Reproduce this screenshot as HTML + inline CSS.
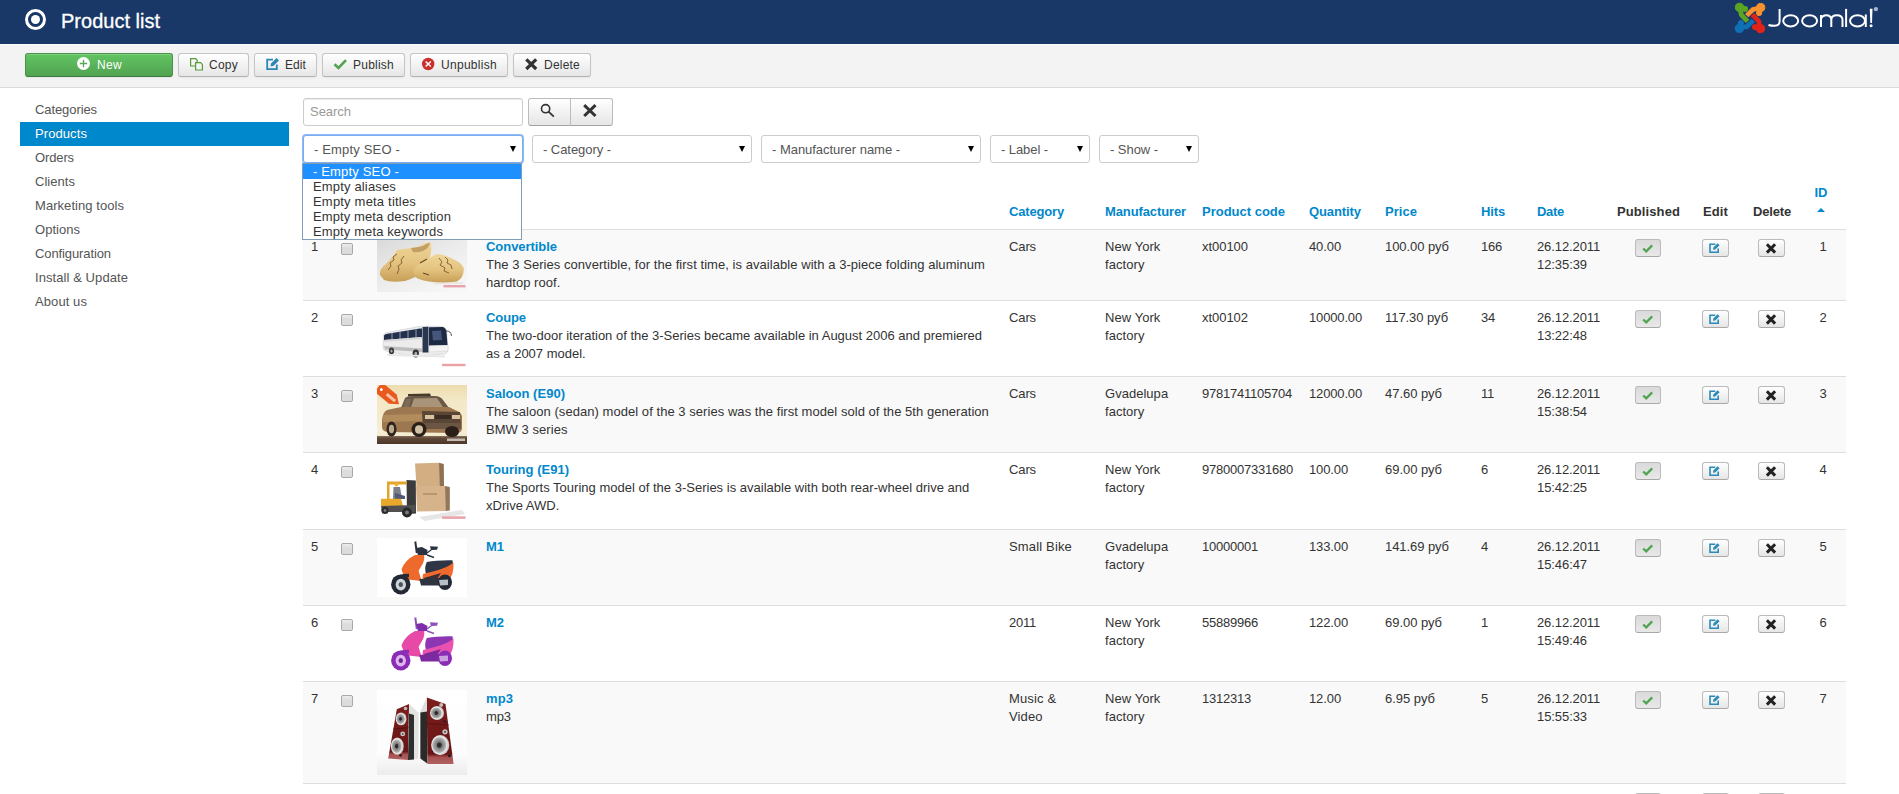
<!DOCTYPE html>
<html><head><meta charset="utf-8">
<style>
*{box-sizing:border-box}
html,body{margin:0;padding:0;background:#fff;width:1899px;height:794px;overflow:hidden}
body{font-family:"Liberation Sans",sans-serif;font-size:13px;line-height:18px;color:#333;position:relative}
.hdr{position:absolute;left:0;top:0;width:1899px;height:44px;background:#1a3867}
.hdr .ring{position:absolute;left:25px;top:9px;width:21px;height:21px;border:3px solid #fff;border-radius:50%}
.hdr .ring:after{content:"";position:absolute;left:3px;top:3px;width:9px;height:9px;background:#fff;border-radius:50%}
.hdr h1{position:absolute;left:61px;top:9px;margin:0;font-size:20px;line-height:24px;font-weight:normal;color:#fff;-webkit-text-stroke:0.3px #fff}
.tb{position:absolute;left:0;top:44px;width:1899px;height:44px;background:#f3f3f3;border-top:1px solid #fafafa;border-bottom:1px solid #dadada}
.btn{position:absolute;top:53px;height:24px;border:1px solid #c5c5c5;border-bottom-color:#b3b3b3;border-radius:3px;background:linear-gradient(#fff,#e6e6e6);font-size:12px;line-height:20px;color:#333;box-shadow:inset 0 1px 0 rgba(255,255,255,.2),0 1px 2px rgba(0,0,0,.05)}
.btn span{position:absolute;top:1px}
.btn svg{position:absolute}
.btn.green{background:linear-gradient(#62c462,#51a351);border-color:#4b934b;border-bottom-color:#3d7a3d;color:#fff}
.sbtn{position:absolute;top:98px;height:28px;border:1px solid #bbb;border-bottom-color:#a2a2a2;background:linear-gradient(#fff,#e6e6e6)}
.side{position:absolute;left:20px;top:98px;width:269px}
.side div{height:24px;line-height:24px;padding-left:15px;color:#555}
.side div.act{background:#0088cc;color:#fff;text-shadow:0 -1px 0 rgba(0,0,0,.2)}
.inp{position:absolute;border:1px solid #ccc;border-radius:3px;background:#fff;box-shadow:inset 0 1px 1px rgba(0,0,0,.075)}
.sel{position:absolute;top:135px;height:28px;border:1px solid #ccc;border-radius:3px;background:#fff;color:#555}
.sel span{position:absolute;left:10px;top:5px}
.sel i{position:absolute;right:6px;top:10px;width:0;height:0;border-left:3px solid transparent;border-right:3px solid transparent;border-top:6px solid #000}
.dd{position:absolute;left:302px;top:163px;width:220px;height:77px;border:1px solid #7f9db9;background:#fff;font-size:13px;line-height:15px;color:#333}
.dd div{height:15px;padding-left:10px}
.dd div.h{background:#1e90ff;color:#fff}
table.list{position:absolute;left:303px;top:177px;border-collapse:separate;border-spacing:0;table-layout:fixed;width:1543px}
table.list th{padding:8px;text-align:left;vertical-align:bottom;font-weight:bold;line-height:18px;color:#333}
table.list th a{color:#0088cc}
table.list td{padding:8px;vertical-align:top;border-top:1px solid #ddd;line-height:18px;white-space:normal}
table.list tr.odd td{background:#f9f9f9}
table.list .c{text-align:center}
a.t{color:#0088cc;font-weight:bold}
.cb{display:block;width:12px;height:12px;margin-top:5px;border:1px solid #a8a8a8;border-radius:2px;background:linear-gradient(#ececec,#dcdcdc 45%,#dcdcdc)}
.im{width:90px;position:relative;overflow:hidden;background:#fff}
.mb{display:inline-block;width:27px;height:18px;border:1px solid #bbb;border-bottom-color:#a8a8a8;border-radius:3px;background:linear-gradient(#fff,#e6e6e6);margin-top:1px;position:relative;vertical-align:top}
.mb.dl{left:-1px}
.mb.act{width:26px;background:linear-gradient(#dadada,#e8e8e8)}
.caret{display:inline-block;width:0;height:0;border-left:4px solid transparent;border-right:4px solid transparent;border-bottom:4px solid #0088cc;vertical-align:middle}
</style></head><body>
<div class="hdr"><div class="ring"></div><h1><x-l style="letter-spacing: 0.006px;">Product list</x-l></h1><svg style="position:absolute;left:1733px;top:1px" width="150" height="34" viewBox="1733 1 150 34">





<g fill="#5aa624" stroke="#5aa624"><circle cx="1739.5" cy="7.3" r="4.1"></circle><circle cx="1745" cy="8.9" r="2.6"></circle><path d="M1739.3 7.2 L1745.2 8.8" stroke-width="4"></path><path d="M1740.3 9 L1741.3 14.8 L1747.6 21.3" stroke-width="4.8" fill="none" stroke-linejoin="round"></path></g><g fill="#0f70b6" stroke="#0f70b6" transform="rotate(-90 1750 18)"><circle cx="1739.5" cy="7.3" r="4.1"></circle><circle cx="1745" cy="8.9" r="2.6"></circle><path d="M1739.3 7.2 L1745.2 8.8" stroke-width="4"></path><path d="M1740.3 9 L1741.3 14.8 L1747.6 21.3" stroke-width="4.8" fill="none" stroke-linejoin="round"></path></g><g fill="#e2231a" stroke="#e2231a" transform="rotate(180 1750 18)"><circle cx="1739.5" cy="7.3" r="4.1"></circle><circle cx="1745" cy="8.9" r="2.6"></circle><path d="M1739.3 7.2 L1745.2 8.8" stroke-width="4"></path><path d="M1740.3 9 L1741.3 14.8 L1747.6 21.3" stroke-width="4.8" fill="none" stroke-linejoin="round"></path></g><g fill="#f7922f" stroke="#f7922f" transform="rotate(90 1750 18)"><circle cx="1739.5" cy="7.3" r="4.1"></circle><circle cx="1745" cy="8.9" r="2.6"></circle><path d="M1739.3 7.2 L1745.2 8.8" stroke-width="4"></path><path d="M1740.3 9 L1741.3 14.8 L1747.6 21.3" stroke-width="4.8" fill="none" stroke-linejoin="round"></path></g><g stroke="#fff" fill="none" stroke-width="2">
<path d="M1779.6 8.9 V21.5 Q1779.6 25.8 1774.5 25.8 Q1771 25.8 1768.5 25"></path>
<ellipse cx="1790.7" cy="20.85" rx="7.5" ry="5.6"></ellipse>
<ellipse cx="1809.6" cy="20.85" rx="7.5" ry="5.6"></ellipse>
<path d="M1821 27 V15 M1821 18.5 Q1822.5 15.3 1826 15.3 Q1831.3 15.3 1831.3 20 V27 M1831.3 20 Q1831.3 15.3 1836.8 15.3 Q1842.5 15.3 1842.5 20 V27"></path>
<path d="M1846.1 8.9 V27"></path>
<ellipse cx="1857.5" cy="20.85" rx="7.5" ry="5.6"></ellipse>
<path d="M1865.8 14.5 V27"></path>
</g>
<path d="M1869.8 8.7 H1872.5 L1872 23 H1870.3 Z" fill="#fff"></path><circle cx="1871.1" cy="25.7" r="1.5" fill="#fff"></circle>
<circle cx="1875.9" cy="9.1" r="2.2" fill="#aab4c8"></circle>
</svg></div>
<div class="tb"></div>
<div class="btn green" style="left:25px;width:148px"><span style="left:71px"><x-l style="letter-spacing: 0.331px;">New</x-l></span></div>
<div class="btn" style="left:178px;width:71px"><span style="left:30px"><x-l style="letter-spacing: 0.247px;">Copy</x-l></span></div>
<div class="btn" style="left:254px;width:63px"><span style="left:30px"><x-l style="letter-spacing: 0.081px;">Edit</x-l></span></div>
<div class="btn" style="left:322px;width:83px"><span style="left:30px"><x-l style="letter-spacing: 0.235px;">Publish</x-l></span></div>
<div class="btn" style="left:410px;width:98px"><span style="left:30px"><x-l style="letter-spacing: 0.293px;">Unpublish</x-l></span></div>
<div class="btn" style="left:513px;width:78px"><span style="left:30px"><x-l style="letter-spacing: 0.219px;">Delete</x-l></span></div>


<svg style="position:absolute;left:0;top:0;z-index:5" width="620" height="130">
<circle cx="83.5" cy="63.5" r="6.5" fill="#fff"></circle>
<path d="M83.5 59.8 V67.2 M79.8 63.5 H87.2" stroke="#55aa55" stroke-width="1.3"></path>
<g fill="none" stroke="#5b9a3a" stroke-width="1.2">
<path d="M190.6 58.6 H195.5 L197.2 60.3 V66 H190.6 Z"></path>
<path d="M195.6 62.6 H200.6 L202.4 64.4 V70 H195.6 Z" fill="#f4f4f4"></path>
</g>
<g fill="none" stroke="#2b86b8" stroke-width="1.8">
<path d="M273 59.6 H267.2 V69.1 H276.8 V64.5"></path>
</g>
<path d="M270.5 66.3 L271 63.6 L276.6 58 L279 60.4 L273.3 66 Z" fill="#2b86b8"></path>
<path d="M334.5 64.2 L338.5 68 L346 60.2" fill="none" stroke="#51a351" stroke-width="2.6"></path>
<circle cx="428.2" cy="64" r="6.2" fill="#c9302c"></circle>
<path d="M425.6 61.4 L430.8 66.6 M430.8 61.4 L425.6 66.6" stroke="#fff" stroke-width="1.4"></path>
<path d="M526.3 59.3 L536.2 69 M536.2 59.3 L526.3 69" stroke="#333" stroke-width="3.2"></path>
<circle cx="545.6" cy="108.7" r="4.1" fill="none" stroke="#333" stroke-width="1.6"></circle>
<path d="M548.5 111.6 L553.8 116.6" stroke="#333" stroke-width="1.8"></path>
<path d="M584.2 105.2 L595.5 116 M595.5 105.2 L584.2 116" stroke="#333" stroke-width="3"></path>
</svg>
<div class="side">
<div><x-l style="letter-spacing: -0.087px;">Categories</x-l></div><div class="act"><x-l style="letter-spacing: 0.087px;">Products</x-l></div><div><x-l style="letter-spacing: -0.122px;">Orders</x-l></div><div><x-l style="letter-spacing: 0.038px;">Clients</x-l></div><div><x-l style="letter-spacing: 0.057px;">Marketing tools</x-l></div><div><x-l style="letter-spacing: 0.028px;">Options</x-l></div><div><x-l style="letter-spacing: -0.102px;">Configuration</x-l></div><div><x-l style="letter-spacing: 0.077px;">Install &amp; Update</x-l></div><div><x-l style="letter-spacing: 0.086px;">About us</x-l></div>
</div>

<div class="inp" style="left:303px;top:98px;width:220px;height:28px"><span style="position:absolute;left:6px;top:4px;color:#999"><x-l style="letter-spacing: -0.032px;">Search</x-l></span></div>

<div class="sbtn" style="left:528px;width:43px;border-radius:3px 0 0 3px"></div><div class="sbtn" style="left:570px;width:43px;border-radius:0 3px 3px 0"></div>
<div class="sel" style="left:303px;width:220px;border-color:#7aaef0;box-shadow:0 0 0 1px #8dbaf3"><span><x-l style="letter-spacing: 0.17px;">- Empty SEO -</x-l></span><i></i></div>
<div class="sel" style="left:532px;width:220px"><span><x-l style="letter-spacing: -0.053px;">- Category -</x-l></span><i></i></div>
<div class="sel" style="left:761px;width:220px"><span><x-l style="letter-spacing: -0.029px;">- Manufacturer name -</x-l></span><i></i></div>
<div class="sel" style="left:990px;width:100px"><span><x-l style="letter-spacing: -0.077px;">- Label -</x-l></span><i></i></div>
<div class="sel" style="left:1099px;width:100px"><span><x-l style="letter-spacing: -0.05px;">- Show -</x-l></span><i></i></div>

<table class="list" style="top:177px">
<colgroup><col style="width:30px"><col style="width:36px"><col style="width:109px"><col style="width:523px"><col style="width:96px"><col style="width:97px"><col style="width:107px"><col style="width:76px"><col style="width:96px"><col style="width:56px"><col style="width:80px"><col style="width:78px"><col style="width:57px"><col style="width:56px"><col style="width:46px"></colgroup>
<thead><tr style="height:52px"><th></th><th></th><th></th><th></th><th><a><x-l style="letter-spacing: -0.169px;">Category</x-l></a></th><th><a><x-l style="letter-spacing: -0.112px;">Manufacturer</x-l></a></th><th><a><x-l style="letter-spacing: -0.005px;">Product code</x-l></a></th><th><a><x-l style="letter-spacing: -0.09px;">Quantity</x-l></a></th><th><a><x-l style="letter-spacing: 0.04px;">Price</x-l></a></th><th><a><x-l style="letter-spacing: -0.14px;">Hits</x-l></a></th><th><a><x-l style="letter-spacing: -0.294px;">Date</x-l></a></th><th class="c"><x-l style="letter-spacing: 0.098px;">Published</x-l></th><th class="c"><x-l style="letter-spacing: 0.112px;">Edit</x-l></th><th class="c"><x-l style="letter-spacing: -0.17px;">Delete</x-l></th><th class="c" style="position:relative;left:-2px;top:-1px"><a>ID</a><br><i class="caret" style="position:relative;top:-2px"></i></th></tr></thead><tbody>
<tr class="odd" style="height:71px"><td><x-l style="letter-spacing: -0.23px;">1</x-l></td><td><span class="cb"></span></td><td><div class="im shoe" style="height:54px"><svg width="90" height="54" viewBox="0 0 90 54"><defs><linearGradient id="sbg" x1="0" y1="0" x2="0.8" y2="1"><stop offset="0" stop-color="#d9d9d9"></stop><stop offset="0.5" stop-color="#ebebeb"></stop><stop offset="1" stop-color="#f7f7f7"></stop></linearGradient><linearGradient id="sh1" x1="0" y1="0" x2="0" y2="1"><stop offset="0" stop-color="#efd699"></stop><stop offset=".55" stop-color="#e3c27e"></stop><stop offset="1" stop-color="#c79f58"></stop></linearGradient></defs><rect width="90" height="54" fill="url(#sbg)"></rect><path d="M3 37 Q2 31 9 26 Q16 19 20 12 Q30 10 40 9.5 Q47 5 52 4.2 Q55 5 54 14 Q53 24 46 31 Q40 40 28 43 Q14 45 7 42 Z" fill="url(#sh1)"></path><path d="M34 10 Q42 9 46 8 Q51 4.5 53 5 Q52 10 46 13 Q40 15 36 14 Z" fill="#c2a064"></path><path d="M36 33 Q38 27 46 24 Q54 19 58 16.5 Q66 15.5 74 20 Q84 24 86.8 30 Q87 40 80 43.5 Q68 45.5 56 44 Q44 43 38 39 Z" fill="url(#sh1)"></path><path d="M11 32 L14 28 L13 25 L17 22 L16 19 L20 16 M20 36 L22 31 L21 28 L25 25 L24 22 L27 18 M62 20 L65 24 L63 27 L68 30 L67 33 L72 35 M68 19 L71 22 L70 25 L74 27 L75 31" stroke="#7a5428" stroke-width="1" fill="none" opacity=".85"></path><path d="M43 25 L50 21 M46 35 L52 37" stroke="#6e4b24" stroke-width="1.3"></path><path d="M56 44.5 L86 44 L86 46 L58 46.5 Z" fill="#e4e0d8" opacity=".6"></path><rect x="66.5" y="47" width="22" height="2.4" fill="#e9a3ab"></rect></svg></div></td><td><a class="t"><x-l style="letter-spacing: -0.047px;">Convertible</x-l></a><br><x-l style="letter-spacing: 0.052px;">The 3 Series convertible, for the first time, is available with a 3-piece folding aluminum hardtop roof.</x-l></td><td><x-l style="letter-spacing: -0.112px;">Cars</x-l></td><td><x-l style="letter-spacing: 0.064px;">New York factory</x-l></td><td><x-l style="letter-spacing: -0.037px;">xt00100</x-l></td><td><x-l style="letter-spacing: -0.106px;">40.00</x-l></td><td><x-l style="letter-spacing: -0.055px;">100.00 руб</x-l></td><td><x-l style="letter-spacing: -0.23px;">166</x-l></td><td><x-l style="letter-spacing: -0.106px;">26.12.2011</x-l><br><x-l style="letter-spacing: -0.075px;">12:35:39</x-l></td><td class="c"><span class="mb act"><svg width="12" height="10" style="position:absolute;left:6px;top:4px"><path d="M1.2 4.5 L4.2 7.4 L10.2 1.4" fill="none" stroke="#51a351" stroke-width="2.2"></path></svg></span></td><td class="c"><span class="mb"><svg width="13" height="12" style="position:absolute;left:6px;top:3px"><path d="M6.3 1.2 H1 V9.2 H9.2 V5.4" fill="none" stroke="#2b8ab9" stroke-width="1.6"></path><path d="M4 6.8 L4.3 4.6 L8.6 0.3 L10.6 2.3 L6.2 6.6 Z" fill="#2b8ab9"></path></svg></span></td><td class="c"><span class="mb dl"><svg width="13" height="12" style="position:absolute;left:6px;top:3px"><path d="M1.9 1.3 L10.1 9.6 M10.1 1.3 L1.9 9.6" stroke="#222" stroke-width="3"></path></svg></span></td><td class="c"><x-l style="letter-spacing: -0.23px;">1</x-l></td></tr>
<tr style="height:76px"><td><x-l style="letter-spacing: -0.23px;">2</x-l></td><td><span class="cb"></span></td><td><div class="im bus" style="height:59px"><svg width="90" height="59" viewBox="0 0 90 59"><rect width="90" height="59" fill="#fff"></rect><path d="M6.5 26 Q7 24 10 23.5 L42 17.5 L62 17.2 Q68 17.5 69.5 21 L71 40 Q71 44 68 45 L52 46.5 L38 47 L10 42.5 Q6 41.5 6 38 Z" fill="#ececec" stroke="#c4c4c4" stroke-width=".5"></path><path d="M7 26.5 Q8 25 10.5 24.8 L43 19.5 L45 19.5 L45 28 L7 31 Z" fill="#22304c"></path><path d="M15 24 L15 30.3 M23 22.8 L23 29.7 M31 21.5 L31 29 M39 20.3 L39 28.5" stroke="#c9cdd6" stroke-width=".7"></path><path d="M7 31 L45 28 L45 30 L7 33 Z" fill="#d8d8d8"></path><path d="M45.5 18 L51.5 17.8 L51.5 43.5 L45.5 43.5 Z" fill="#2a3650"></path><path d="M52 18.2 L66 18 Q69 19 69.5 23 L70.5 36 L52 36.5 Z" fill="#1d2a44"></path><path d="M55 22 L64 21.5 L65 31 L56 31.5 Z" fill="#46557a"></path><path d="M7 37 L45 39.5 L45 43 L8 40.5 Z" fill="#bdbdbd"></path><path d="M52 37 L71 36.5 L71 42 L52 43 Z" fill="#f4f4f4" stroke="#c8c8c8" stroke-width=".4"></path><ellipse cx="14.5" cy="42" rx="2.6" ry="3.4" fill="#3a3a3a"></ellipse><ellipse cx="14.5" cy="42" rx="1.1" ry="1.5" fill="#aaa"></ellipse><ellipse cx="38.8" cy="44.5" rx="3.2" ry="4" fill="#333"></ellipse><ellipse cx="38.8" cy="44.5" rx="1.4" ry="1.8" fill="#aaa"></ellipse><path d="M69 22 Q74 21.5 74.5 27" stroke="#555" stroke-width="1" fill="none"></path><path d="M10 46 L68 47.5" stroke="#e8e8e8" stroke-width="2"></path><rect x="65" y="54.8" width="23.5" height="2.4" fill="#eaa2a7"></rect></svg></div></td><td><a class="t"><x-l style="letter-spacing: -0.088px;">Coupe</x-l></a><br><x-l style="letter-spacing: -0.005px;">The two-door iteration of the 3-Series became available in August 2006 and premiered as a 2007 model.</x-l></td><td><x-l style="letter-spacing: -0.112px;">Cars</x-l></td><td><x-l style="letter-spacing: 0.064px;">New York factory</x-l></td><td><x-l style="letter-spacing: -0.037px;">xt00102</x-l></td><td><x-l style="letter-spacing: -0.153px;">10000.00</x-l></td><td><x-l style="letter-spacing: -0.055px;">117.30 руб</x-l></td><td><x-l style="letter-spacing: -0.23px;">34</x-l></td><td><x-l style="letter-spacing: -0.106px;">26.12.2011</x-l><br><x-l style="letter-spacing: -0.075px;">13:22:48</x-l></td><td class="c"><span class="mb act"><svg width="12" height="10" style="position:absolute;left:6px;top:4px"><path d="M1.2 4.5 L4.2 7.4 L10.2 1.4" fill="none" stroke="#51a351" stroke-width="2.2"></path></svg></span></td><td class="c"><span class="mb"><svg width="13" height="12" style="position:absolute;left:6px;top:3px"><path d="M6.3 1.2 H1 V9.2 H9.2 V5.4" fill="none" stroke="#2b8ab9" stroke-width="1.6"></path><path d="M4 6.8 L4.3 4.6 L8.6 0.3 L10.6 2.3 L6.2 6.6 Z" fill="#2b8ab9"></path></svg></span></td><td class="c"><span class="mb dl"><svg width="13" height="12" style="position:absolute;left:6px;top:3px"><path d="M1.9 1.3 L10.1 9.6 M10.1 1.3 L1.9 9.6" stroke="#222" stroke-width="3"></path></svg></span></td><td class="c"><x-l style="letter-spacing: -0.23px;">2</x-l></td></tr>
<tr class="odd" style="height:76px"><td><x-l style="letter-spacing: -0.23px;">3</x-l></td><td><span class="cb"></span></td><td><div class="im suv" style="height:59px"><svg width="90" height="59" viewBox="0 0 90 59"><defs><linearGradient id="sky" x1="0" y1="0" x2="0" y2="1"><stop offset="0" stop-color="#eddcae"></stop><stop offset=".25" stop-color="#f3e8c6"></stop><stop offset=".8" stop-color="#f6eed4"></stop><stop offset="1" stop-color="#ebdfbd"></stop></linearGradient><linearGradient id="gnd" x1="0" y1="0" x2="0" y2="1"><stop offset="0" stop-color="#85705c"></stop><stop offset=".3" stop-color="#5e4737"></stop><stop offset="1" stop-color="#4c3628"></stop></linearGradient></defs><rect width="90" height="59" fill="url(#sky)"></rect><rect y="51" width="90" height="8" fill="url(#gnd)"></rect><path d="M31 9 L53 8.5 L54 11 L31 11.5 Z" fill="#4a3a2c"></path><path d="M24 23 L28 13 Q30 11 36 11 L58 11 Q63 11 66 15 L72 23 Z" fill="#6a5848"></path><path d="M34 22 L37 13.5 L60 13 L66 22 Z" fill="#a9947a"></path><path d="M26 22 L29 14 L34 14 L32 22 Z" fill="#7e6a58"></path><path d="M5 36 Q5 28 10 25 L24 22 L72 22 L78 25 Q84 27 85 31 L85 44 Q84 48 80 48 L10 47 Q5 46 5 42 Z" fill="#9c774f"></path><path d="M6 30 L45 29 L45 36 L6 37 Z" fill="#b8915f" opacity=".8"></path><path d="M45 26 L83 27 L84 42 L46 42 Z" fill="#5a4634"></path><path d="M48 30 L57 30 L57 34 L48 34 Z M75 30 L83 30 L83 34 L75 34 Z" fill="#d9c3a1"></path><path d="M58 30 L74 30 L74 34 L58 34 Z" fill="#3a2c22"></path><path d="M46 38 L84 38 L84 44 L46 44 Z" fill="#6b5643"></path><ellipse cx="14.5" cy="44" rx="5" ry="7.5" fill="#2f241c"></ellipse><ellipse cx="14.5" cy="44" rx="2.6" ry="4.2" fill="#bba98f"></ellipse><ellipse cx="42" cy="44.5" rx="7.5" ry="7.5" fill="#2a2019"></ellipse><ellipse cx="42" cy="44.5" rx="4" ry="4.2" fill="#d1c1a6"></ellipse><ellipse cx="75" cy="46.5" rx="7" ry="5.5" fill="#2a2019"></ellipse><g transform="rotate(40 12 11)"><path d="M-2 5 L17 5 L25 11 L17 17 L-2 17 Z" fill="#e85a1e"></path><circle cx="2" cy="11" r="1.4" fill="#fff"></circle><path d="M9 9.5 H20 V12.5 H9 Z" fill="#f6c3aa"></path></g><rect x="70" y="53.5" width="18" height="2.5" fill="#c8bcb2"></rect></svg></div></td><td><a class="t"><x-l style="letter-spacing: 0.022px;">Saloon (E90)</x-l></a><br><x-l style="letter-spacing: 0.049px;">The saloon (sedan) model of the 3 series was the first model sold of the 5th generation BMW 3 series</x-l></td><td><x-l style="letter-spacing: -0.112px;">Cars</x-l></td><td><x-l style="letter-spacing: 0.029px;">Gvadelupa factory</x-l></td><td><x-l style="letter-spacing: -0.23px;">9781741105704</x-l></td><td><x-l style="letter-spacing: -0.153px;">12000.00</x-l></td><td><x-l style="letter-spacing: -0.035px;">47.60 руб</x-l></td><td><x-l style="letter-spacing: -0.23px;">11</x-l></td><td><x-l style="letter-spacing: -0.106px;">26.12.2011</x-l><br><x-l style="letter-spacing: -0.075px;">15:38:54</x-l></td><td class="c"><span class="mb act"><svg width="12" height="10" style="position:absolute;left:6px;top:4px"><path d="M1.2 4.5 L4.2 7.4 L10.2 1.4" fill="none" stroke="#51a351" stroke-width="2.2"></path></svg></span></td><td class="c"><span class="mb"><svg width="13" height="12" style="position:absolute;left:6px;top:3px"><path d="M6.3 1.2 H1 V9.2 H9.2 V5.4" fill="none" stroke="#2b8ab9" stroke-width="1.6"></path><path d="M4 6.8 L4.3 4.6 L8.6 0.3 L10.6 2.3 L6.2 6.6 Z" fill="#2b8ab9"></path></svg></span></td><td class="c"><span class="mb dl"><svg width="13" height="12" style="position:absolute;left:6px;top:3px"><path d="M1.9 1.3 L10.1 9.6 M10.1 1.3 L1.9 9.6" stroke="#222" stroke-width="3"></path></svg></span></td><td class="c"><x-l style="letter-spacing: -0.23px;">3</x-l></td></tr>
<tr style="height:77px"><td><x-l style="letter-spacing: -0.23px;">4</x-l></td><td><span class="cb"></span></td><td><div class="im fork" style="height:60px"><svg width="90" height="60" viewBox="0 0 90 60"><rect width="90" height="60" fill="#fff"></rect><path d="M42 56 L85 49 L88 53 L48 60 Z" fill="#e6e6e6"></path><path d="M38 2.5 L62 1.8 L62.5 25.5 L39.5 26 Z" fill="#d2ae82"></path><path d="M62 1.8 L66.8 3 L67 25.5 L62.5 25.5 Z" fill="#8f7152"></path><path d="M39 25.2 L68 25 L68.5 50 L40 50.5 Z" fill="#d6b38b"></path><path d="M68 25 L72.8 26 L72.8 49.5 L68.5 50 Z" fill="#94765a"></path><path d="M46 32 L60 32 L60 34 L46 34 Z" fill="#b99570"></path><path d="M29.5 19 L38.8 19.5 L39 52.6 L30 53 Z" fill="#3b3b3b"></path><path d="M10 20.5 L29.5 20.5 L29.5 23.5 L12.5 23.5 L12.5 38 L10 38 Z" fill="#e3a42a"></path><circle cx="19.5" cy="23.5" r="2" fill="#e9b23a"></circle><path d="M16.5 26 L23 26 L25 38 L16 38 Z" fill="#7b7f8a"></path><path d="M18 32 L28 35 L28 38 L18 38 Z" fill="#4f5a78"></path><path d="M4 37.7 L24 37.7 L26 45 L4 45 Z" fill="#e7a82c"></path><path d="M4 45 L38 44 L38.5 51 L5 51 Z" fill="#505050"></path><circle cx="8" cy="49.5" r="3.6" fill="#2e2e2e"></circle><circle cx="8" cy="49.5" r="1.4" fill="#777"></circle><circle cx="30" cy="51.5" r="5" fill="#2a2a2a"></circle><circle cx="30" cy="51.5" r="2" fill="#777"></circle><rect x="65" y="55.3" width="23.5" height="2.6" fill="#eaa5aa"></rect></svg></div></td><td><a class="t"><x-l style="letter-spacing: 0.017px;">Touring (E91)</x-l></a><br><x-l style="letter-spacing: 0.009px;">The Sports Touring model of the 3-Series is available with both rear-wheel drive and xDrive AWD.</x-l></td><td><x-l style="letter-spacing: -0.112px;">Cars</x-l></td><td><x-l style="letter-spacing: 0.064px;">New York factory</x-l></td><td><x-l style="letter-spacing: -0.23px;">9780007331680</x-l></td><td><x-l style="letter-spacing: -0.127px;">100.00</x-l></td><td><x-l style="letter-spacing: -0.035px;">69.00 руб</x-l></td><td><x-l style="letter-spacing: -0.23px;">6</x-l></td><td><x-l style="letter-spacing: -0.106px;">26.12.2011</x-l><br><x-l style="letter-spacing: -0.075px;">15:42:25</x-l></td><td class="c"><span class="mb act"><svg width="12" height="10" style="position:absolute;left:6px;top:4px"><path d="M1.2 4.5 L4.2 7.4 L10.2 1.4" fill="none" stroke="#51a351" stroke-width="2.2"></path></svg></span></td><td class="c"><span class="mb"><svg width="13" height="12" style="position:absolute;left:6px;top:3px"><path d="M6.3 1.2 H1 V9.2 H9.2 V5.4" fill="none" stroke="#2b8ab9" stroke-width="1.6"></path><path d="M4 6.8 L4.3 4.6 L8.6 0.3 L10.6 2.3 L6.2 6.6 Z" fill="#2b8ab9"></path></svg></span></td><td class="c"><span class="mb dl"><svg width="13" height="12" style="position:absolute;left:6px;top:3px"><path d="M1.9 1.3 L10.1 9.6 M10.1 1.3 L1.9 9.6" stroke="#222" stroke-width="3"></path></svg></span></td><td class="c"><x-l style="letter-spacing: -0.23px;">4</x-l></td></tr>
<tr class="odd" style="height:76px"><td><x-l style="letter-spacing: -0.23px;">5</x-l></td><td><span class="cb"></span></td><td><div class="im scoot1" style="height:59px"><svg width="90" height="59" viewBox="0 0 90 59"><rect width="90" height="59" fill="#fff"></rect><path d="M38.3 3.5 L39.8 15" stroke="#2a3140" stroke-width="2"></path><path d="M50 15 L56 10.5" stroke="#2a3140" stroke-width="1.2"></path><path d="M53 8.3 L61 8.8 L60 11.8 L54 12 Z" fill="#2a3140"></path><path d="M50 17 L57 19.5" stroke="#2a3140" stroke-width="1.5"></path><path d="M39 10 L45 8.9 L50.5 12 L50 17 L41 17.5 Z" fill="#2b3342"></path><path d="M38 17 L47 17 Q48 22 45 27 L41.6 32.7 L44.6 43.1 L31.2 41.6 Q26 38 24.5 31.2 Q28 22 38 17 Z" fill="#ee6a2c"></path><path d="M49.8 24 Q60 22 75.5 22.3 L76 26 Q70 31 58 33.4 L49 36 Q47 30 49.8 24 Z" fill="#2e3645"></path><path d="M46 36 L58 33 Q70 30 76.5 24.5 Q77 36 72 42 L62 46 L45 45 Z" fill="#f06a2e"></path><path d="M47 40 L64 35 L60 41 L48 42.5 Z" fill="#3a2f35"></path><path d="M42.3 41 L62.4 40 L62 47.5 L44 47.5 Z" fill="#2e3440"></path><path d="M17 41.6 Q20 35.7 32 35.7 L32 39 Q24 38 17 41.6 Z" fill="#232a36"></path><ellipse cx="23.8" cy="46.4" rx="9.7" ry="10" fill="#232a36"></ellipse><ellipse cx="23.8" cy="46.6" rx="5.2" ry="5.8" fill="#cfd4da"></ellipse><ellipse cx="23.8" cy="46.6" rx="2.2" ry="2.5" fill="#4a4f58"></ellipse><ellipse cx="68" cy="44.2" rx="7" ry="7.8" fill="#232a36"></ellipse><path d="M62 42 L71 41.5 L71 47 L63 47.5 Z" fill="#b8bec6"></path></svg></div></td><td><a class="t"><x-l style="letter-spacing: -0.03px;">M1</x-l></a></td><td><x-l style="letter-spacing: 0.159px;">Small Bike</x-l></td><td><x-l style="letter-spacing: 0.029px;">Gvadelupa factory</x-l></td><td><x-l style="letter-spacing: -0.23px;">10000001</x-l></td><td><x-l style="letter-spacing: -0.127px;">133.00</x-l></td><td><x-l style="letter-spacing: -0.055px;">141.69 руб</x-l></td><td><x-l style="letter-spacing: -0.23px;">4</x-l></td><td><x-l style="letter-spacing: -0.106px;">26.12.2011</x-l><br><x-l style="letter-spacing: -0.075px;">15:46:47</x-l></td><td class="c"><span class="mb act"><svg width="12" height="10" style="position:absolute;left:6px;top:4px"><path d="M1.2 4.5 L4.2 7.4 L10.2 1.4" fill="none" stroke="#51a351" stroke-width="2.2"></path></svg></span></td><td class="c"><span class="mb"><svg width="13" height="12" style="position:absolute;left:6px;top:3px"><path d="M6.3 1.2 H1 V9.2 H9.2 V5.4" fill="none" stroke="#2b8ab9" stroke-width="1.6"></path><path d="M4 6.8 L4.3 4.6 L8.6 0.3 L10.6 2.3 L6.2 6.6 Z" fill="#2b8ab9"></path></svg></span></td><td class="c"><span class="mb dl"><svg width="13" height="12" style="position:absolute;left:6px;top:3px"><path d="M1.9 1.3 L10.1 9.6 M10.1 1.3 L1.9 9.6" stroke="#222" stroke-width="3"></path></svg></span></td><td class="c"><x-l style="letter-spacing: -0.23px;">5</x-l></td></tr>
<tr style="height:76px"><td><x-l style="letter-spacing: -0.23px;">6</x-l></td><td><span class="cb"></span></td><td><div class="im scoot2" style="height:59px"><svg width="90" height="59" viewBox="0 0 90 59"><rect width="90" height="59" fill="#fff"></rect><path d="M38.3 3.5 L39.8 15" stroke="#8d52b8" stroke-width="2"></path><path d="M50 15 L56 10.5" stroke="#8d52b8" stroke-width="1.2"></path><path d="M53 8.3 L61 8.8 L60 11.8 L54 12 Z" fill="#8d52b8"></path><path d="M50 17 L57 19.5" stroke="#8d52b8" stroke-width="1.5"></path><path d="M39 10 L45 8.9 L50.5 12 L50 17 L41 17.5 Z" fill="#7e2ea8"></path><path d="M38 17 L47 17 Q48 22 45 27 L41.6 32.7 L44.6 43.1 L31.2 41.6 Q26 38 24.5 31.2 Q28 22 38 17 Z" fill="#e64aa6"></path><path d="M49.8 24 Q60 22 75.5 22.3 L76 26 Q70 31 58 33.4 L49 36 Q47 30 49.8 24 Z" fill="#8c36b4"></path><path d="M46 36 L58 33 Q70 30 76.5 24.5 Q77 36 72 42 L62 46 L45 45 Z" fill="#ea50b0"></path><path d="M47 40 L64 35 L60 41 L48 42.5 Z" fill="#7a2a9a"></path><path d="M42.3 41 L62.4 40 L62 47.5 L44 47.5 Z" fill="#7c2aa0"></path><path d="M17 41.6 Q20 35.7 32 35.7 L32 39 Q24 38 17 41.6 Z" fill="#8a2cb6"></path><ellipse cx="23.8" cy="46.4" rx="9.7" ry="10" fill="#8a2cb6"></ellipse><ellipse cx="23.8" cy="46.6" rx="5.2" ry="5.8" fill="#e0b4ee"></ellipse><ellipse cx="23.8" cy="46.6" rx="2.2" ry="2.5" fill="#6a2a90"></ellipse><ellipse cx="68" cy="44.2" rx="7" ry="7.8" fill="#8a2cb6"></ellipse><path d="M62 42 L71 41.5 L71 47 L63 47.5 Z" fill="#c8a0dc"></path></svg></div></td><td><a class="t"><x-l style="letter-spacing: -0.03px;">M2</x-l></a></td><td><x-l style="letter-spacing: -0.23px;">2011</x-l></td><td><x-l style="letter-spacing: 0.064px;">New York factory</x-l></td><td><x-l style="letter-spacing: -0.23px;">55889966</x-l></td><td><x-l style="letter-spacing: -0.127px;">122.00</x-l></td><td><x-l style="letter-spacing: -0.035px;">69.00 руб</x-l></td><td><x-l style="letter-spacing: -0.23px;">1</x-l></td><td><x-l style="letter-spacing: -0.106px;">26.12.2011</x-l><br><x-l style="letter-spacing: -0.075px;">15:49:46</x-l></td><td class="c"><span class="mb act"><svg width="12" height="10" style="position:absolute;left:6px;top:4px"><path d="M1.2 4.5 L4.2 7.4 L10.2 1.4" fill="none" stroke="#51a351" stroke-width="2.2"></path></svg></span></td><td class="c"><span class="mb"><svg width="13" height="12" style="position:absolute;left:6px;top:3px"><path d="M6.3 1.2 H1 V9.2 H9.2 V5.4" fill="none" stroke="#2b8ab9" stroke-width="1.6"></path><path d="M4 6.8 L4.3 4.6 L8.6 0.3 L10.6 2.3 L6.2 6.6 Z" fill="#2b8ab9"></path></svg></span></td><td class="c"><span class="mb dl"><svg width="13" height="12" style="position:absolute;left:6px;top:3px"><path d="M1.9 1.3 L10.1 9.6 M10.1 1.3 L1.9 9.6" stroke="#222" stroke-width="3"></path></svg></span></td><td class="c"><x-l style="letter-spacing: -0.23px;">6</x-l></td></tr>
<tr class="odd" style="height:102px"><td><x-l style="letter-spacing: -0.23px;">7</x-l></td><td><span class="cb"></span></td><td><div class="im spk" style="height:85px"><svg width="90" height="85" viewBox="0 0 90 85"><defs><linearGradient id="spbg" x1="0" y1="0" x2="0" y2="1"><stop offset="0" stop-color="#fff"></stop><stop offset=".75" stop-color="#fcfcfc"></stop><stop offset="1" stop-color="#ececec"></stop></linearGradient><radialGradient id="cone" cx=".45" cy=".5"><stop offset="0" stop-color="#222"></stop><stop offset=".22" stop-color="#333"></stop><stop offset=".3" stop-color="#777"></stop><stop offset=".72" stop-color="#b5b5b5"></stop><stop offset=".8" stop-color="#e6e6e6"></stop><stop offset="1" stop-color="#cfcfcf"></stop></radialGradient><linearGradient id="red" x1="0" y1="0" x2="0" y2="1"><stop offset="0" stop-color="#7c1d1d"></stop><stop offset=".85" stop-color="#681515"></stop><stop offset=".9" stop-color="#a85050"></stop><stop offset="1" stop-color="#b06262"></stop></linearGradient></defs><rect width="90" height="85" fill="url(#spbg)"></rect><path d="M19.8 19.3 L32.1 13.9 L31 70 L11.2 68.5 Z" fill="url(#red)"></path><path d="M32.1 13.9 L41.8 23 L41.3 68.5 L31 70 Z" fill="#e2e2e2"></path><path d="M32 23.5 L37 25 L37 69.5 L31 70 Z" fill="#2e2e2e"></path><path d="M16.4 38.5 L31.5 37.3 L31.5 38.2 L16.2 39.5 Z" fill="#551010"></path><path d="M49.8 7.5 L68.5 13.9 L76.6 73.9 L50.3 73.9 Z" fill="url(#red)"></path><path d="M43.4 21.4 L49.8 7.5 L50.3 73.9 L43.4 68.5 Z" fill="#dedede"></path><path d="M43.4 22.5 L50 21.5 L50.3 73.5 L43.4 68.5 Z" fill="#2a2a2a"></path><path d="M50.5 33 L71.5 34.5 L71.7 35.5 L50.5 34 Z" fill="#5a1414"></path><ellipse cx="24.1" cy="28.9" rx="5.4" ry="6.4" fill="url(#cone)"></ellipse><ellipse cx="20.3" cy="56.2" rx="6.4" ry="8.6" fill="url(#cone)"></ellipse><circle cx="25.7" cy="43.9" r="2.4" fill="#c8c8c8"></circle><circle cx="25.7" cy="43.9" r="1" fill="#555"></circle><circle cx="28.5" cy="18.5" r="1.8" fill="#bbb"></circle><circle cx="23.6" cy="65.3" r="1.4" fill="#222"></circle><ellipse cx="60" cy="23" rx="7" ry="7" fill="url(#cone)"></ellipse><ellipse cx="63.2" cy="55.1" rx="9.1" ry="10.2" fill="url(#cone)"></ellipse><circle cx="64.2" cy="15" r="2" fill="#c0c0c0"></circle><circle cx="68" cy="41.8" r="2.6" fill="#c8c8c8"></circle><circle cx="68" cy="41.8" r="1.1" fill="#555"></circle><circle cx="72.3" cy="65.8" r="1.5" fill="#222"></circle><circle cx="67.5" cy="31.5" r="1.2" fill="#222"></circle></svg></div></td><td><a class="t"><x-l style="letter-spacing: 0.09px;">mp3</x-l></a><br><x-l style="letter-spacing: -0.096px;">mp3</x-l></td><td><x-l style="letter-spacing: 0.147px;">Music &amp; Video</x-l></td><td><x-l style="letter-spacing: 0.064px;">New York factory</x-l></td><td><x-l style="letter-spacing: -0.23px;">1312313</x-l></td><td><x-l style="letter-spacing: -0.106px;">12.00</x-l></td><td><x-l style="letter-spacing: -0.011px;">6.95 руб</x-l></td><td><x-l style="letter-spacing: -0.23px;">5</x-l></td><td><x-l style="letter-spacing: -0.106px;">26.12.2011</x-l><br><x-l style="letter-spacing: -0.075px;">15:55:33</x-l></td><td class="c"><span class="mb act"><svg width="12" height="10" style="position:absolute;left:6px;top:4px"><path d="M1.2 4.5 L4.2 7.4 L10.2 1.4" fill="none" stroke="#51a351" stroke-width="2.2"></path></svg></span></td><td class="c"><span class="mb"><svg width="13" height="12" style="position:absolute;left:6px;top:3px"><path d="M6.3 1.2 H1 V9.2 H9.2 V5.4" fill="none" stroke="#2b8ab9" stroke-width="1.6"></path><path d="M4 6.8 L4.3 4.6 L8.6 0.3 L10.6 2.3 L6.2 6.6 Z" fill="#2b8ab9"></path></svg></span></td><td class="c"><span class="mb dl"><svg width="13" height="12" style="position:absolute;left:6px;top:3px"><path d="M1.9 1.3 L10.1 9.6 M10.1 1.3 L1.9 9.6" stroke="#222" stroke-width="3"></path></svg></span></td><td class="c"><x-l style="letter-spacing: -0.23px;">7</x-l></td></tr>
<tr style="height:76px"><td></td><td><span class="cb"></span></td><td><div class="im" style="height:59px"></div></td><td></td><td></td><td></td><td></td><td></td><td></td><td></td><td></td><td class="c"><span class="mb act"></span></td><td class="c"><span class="mb"></span></td><td class="c"><span class="mb dl"></span></td><td></td></tr>
</tbody></table>
<div class="dd"><div class="h"><x-l style="letter-spacing: 0.17px;">- Empty SEO -</x-l></div><div><x-l style="letter-spacing: 0.16px;">Empty aliases</x-l></div><div><x-l style="letter-spacing: 0.194px;">Empty meta titles</x-l></div><div><x-l style="letter-spacing: 0.098px;">Empty meta description</x-l></div><div><x-l style="letter-spacing: 0.112px;">Empty meta keywords</x-l></div></div>

</body></html>
